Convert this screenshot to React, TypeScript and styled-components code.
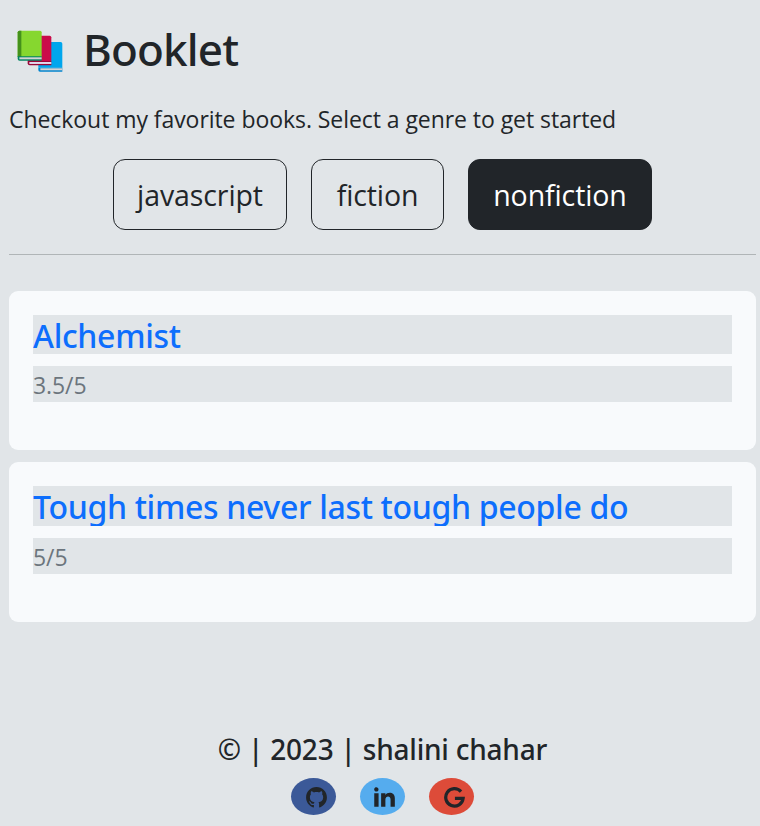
import React, { useState } from "react";
import styled, { createGlobalStyle } from "styled-components";
import { RiGithubFill, RiLinkedinFill } from "react-icons/ri";

const GlobalStyle = createGlobalStyle`
  * { box-sizing: border-box; }
  body {
    margin: 0;
    background: #e1e5e8;
    color: #212529;
    font-family: "Open Sans", "Noto Sans", sans-serif;
  }
  h1, h2, h3, p, ul { margin: 0; padding: 0; }
`;

const Page = styled.div`
  min-height: 826px;
  padding: 18px 4px 0 9px;
  display: flex;
  flex-direction: column;
`;

const Header = styled.header`
  height: 64px;
  display: flex;
  align-items: center;
  gap: 20px;
  padding-left: 8px;
`;

const Title = styled.h1`
  padding-bottom: 2px;
  font: 500 44px/60px "Noto Sans", sans-serif;
  letter-spacing: -0.85px;
`;

const Intro = styled.p`
  margin-top: 19px;
  height: 36px;
  font-size: 23px;
  line-height: 36px;
  letter-spacing: -0.06px;
  white-space: nowrap;
`;

const Genres = styled.nav`
  display: flex;
  justify-content: center;
  gap: 24px;
  margin-top: 22px;
`;

const GenreButton = styled.button<{ $active: boolean; $width: number }>`
  width: ${(p) => p.$width}px;
  height: 71px;
  padding: 0;
  border: 1px solid #212529;
  border-radius: 12px;
  background: ${(p) => (p.$active ? "#212529" : "transparent")};
  color: ${(p) => (p.$active ? "#fff" : "#212529")};
  font: 400 28.5px/68px "Open Sans", sans-serif;
  letter-spacing: -0.1px;
  cursor: pointer;
`;

const Divider = styled.hr`
  width: 100%;
  height: 1px;
  margin: 24px 0 0;
  border: 0;
  background: #b0b5b7;
`;

const BookList = styled.ul`
  list-style: none;
  margin-top: 35.8px;
  display: flex;
  flex-direction: column;
  gap: 12px;
`;

const BookCard = styled.li`
  height: 159.6px;
  padding: 24px;
  border-radius: 9px;
  background: #f8fafc;
`;

const BookName = styled.h3`
  height: 39.6px;
  margin-bottom: 12px;
  overflow: hidden;
  background: #e1e5e8;
  color: #0d6efd;
  font: 500 32px/42px "Noto Sans", sans-serif;
  letter-spacing: -0.32px;
`;

const Rating = styled.p`
  height: 36px;
  background: #e1e5e8;
  color: #6c757d;
  font-size: 23px;
  line-height: 38px;
  letter-spacing: -0.1px;
`;

const Footer = styled.footer`
  margin-top: 107px;
  display: flex;
  flex-direction: column;
  align-items: center;
`;

const Copyright = styled.h2`
  font: 500 28px/40px "Noto Sans", sans-serif;
  letter-spacing: -0.22px;
  white-space: nowrap;
`;

const Socials = styled.div`
  display: flex;
  gap: 24px;
  margin-top: 9px;
`;

const SocialLink = styled.a<{ $color: string; $indent: number }>`
  width: 45px;
  height: 37px;
  padding: 2px 0 0 ${(p) => p.$indent}px;
  display: flex;
  align-items: center;
  border-radius: 50%;
  background: ${(p) => p.$color};
  color: #212529;
`;

const BooksIcon = () => (
  <svg width="46" height="42.3" viewBox="20 22 138 127" overflow="visible" aria-hidden="true">
    <path d="M84 61h67q5 0 5 5v72H84z" fill="#00a6ed" />
    <path d="M84 138h72v12H89q-5 0-5-5z" fill="#0084ce" />
    <path d="M90 140h66v6H90z" fill="#d3d3d3" />
    <path d="M52 42h66q5 0 5 5v71H52z" fill="#ca0b4a" />
    <path d="M52 118h71v13H58q-6 0-6-6z" fill="#990838" />
    <path d="M57 121h66v6H57z" fill="#e1d8ec" />
    <path d="M27 27h62q5 0 5 5v74H22V32q0-5 5-5z" fill="#86d72f" />
    <path d="M27 27h6v79H22V32q0-5 5-5z" fill="#44911b" />
    <path d="M22 104h72v13H28q-6 0-6-6z" fill="#008463" />
    <path d="M27 107h67v6H27z" fill="#d3d3d3" />
  </svg>
);

const GoogleIcon = () => (
  <svg width="21" height="21" viewBox="0 0 20 20" aria-hidden="true">
    <path
      d="M16.2 4.4A8.3 8.3 0 1 0 18.2 10.8H10.4"
      fill="none"
      stroke="currentColor"
      strokeWidth="3.1"
    />
  </svg>
);

const genres = [
  { name: "javascript", width: 174 },
  { name: "fiction", width: 133 },
  { name: "nonfiction", width: 184 },
];

const books: Record<string, { name: string; rating: string }[]> = {
  javascript: [],
  fiction: [],
  nonfiction: [
    { name: "Alchemist", rating: "3.5/5" },
    { name: "Tough times never last tough people do", rating: "5/5" },
  ],
};

export default function App() {
  const [genre, setGenre] = useState("nonfiction");
  return (
    <Page>
      <GlobalStyle />
      <Header>
        <BooksIcon />
        <Title>Booklet</Title>
      </Header>
      <Intro>Checkout my favorite books. Select a genre to get started</Intro>
      <Genres>
        {genres.map((g) => (
          <GenreButton
            key={g.name}
            $width={g.width}
            $active={g.name === genre}
            onClick={() => setGenre(g.name)}
          >
            {g.name}
          </GenreButton>
        ))}
      </Genres>
      <Divider />
      <BookList>
        {books[genre].map((b) => (
          <BookCard key={b.name}>
            <BookName>{b.name}</BookName>
            <Rating>{b.rating}</Rating>
          </BookCard>
        ))}
      </BookList>
      <Footer>
        <Copyright>© | 2023 | shalini chahar</Copyright>
        <Socials>
          <SocialLink $color="#3b5998" $indent={13} aria-label="GitHub">
            <RiGithubFill size={25} />
          </SocialLink>
          <SocialLink $color="#55acee" $indent={11} aria-label="LinkedIn">
            <RiLinkedinFill size={26} />
          </SocialLink>
          <SocialLink $color="#dd4b39" $indent={15} aria-label="Google">
            <GoogleIcon />
          </SocialLink>
        </Socials>
      </Footer>
    </Page>
  );
}
